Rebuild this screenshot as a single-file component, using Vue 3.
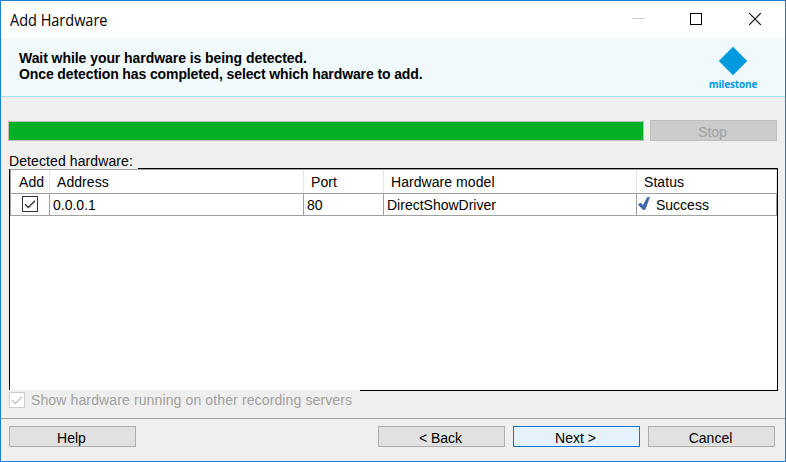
<script setup>
const columns = ['Add', 'Address', 'Port', 'Hardware model', 'Status']
const rows = [{ address: '0.0.0.1', port: '80', model: 'DirectShowDriver', status: 'Success' }]
</script>

<template>
  <div class="window">
    <header class="titlebar">
      <span class="title"><span class="t">Add Hardware</span></span>
      <svg class="controls" width="160" height="36" viewBox="0 0 160 36">
        <path d="M7 17.5H19" stroke="#ccc" fill="none" />
        <rect x="65.5" y="12.5" width="11" height="11" stroke="#000" fill="none" />
        <path d="M124.2 12.2l11.6 11.6M135.8 12.2l-11.6 11.6" stroke="#000" stroke-width="1.1" fill="none" />
      </svg>
    </header>
    <section class="banner">
      <div class="message">
        <div><span class="t l1">Wait while your hardware is being detected.</span></div>
        <div><span class="t l2">Once detection has completed, select which hardware to add.</span></div>
      </div>
      <div class="brand">
        <svg width="30" height="30" viewBox="0 0 30 30"><path d="M15 .8L29.2 15 15 29.2.8 15z" fill="#0099de" /></svg>
        <span>milestone</span>
      </div>
    </section>
    <main class="content">
      <div class="progress-row">
        <div class="progress"></div>
        <button class="btn stop" disabled><span>Stop</span></button>
      </div>
      <div class="caption"><span class="label">Detected hardware:</span><span class="rule"></span></div>
      <div class="list">
        <div class="grid head">
          <div v-for="c in columns" :key="c" class="cell">{{ c }}</div>
        </div>
        <div v-for="r in rows" :key="r.address" class="grid row">
          <div class="cell check">
            <svg width="16" height="16" viewBox="0 0 16 16">
              <rect x=".5" y=".5" width="15" height="15" fill="#fff" stroke="#333" />
              <path d="M3 8.2l3.3 3.3L13 4.7" fill="none" stroke="#333" stroke-width="1.3" />
            </svg>
          </div>
          <div class="cell">{{ r.address }}</div>
          <div class="cell">{{ r.port }}</div>
          <div class="cell">{{ r.model }}</div>
          <div class="cell status">
            <svg width="14" height="14" viewBox="0 0 14 14">
              <path d="M.2 7.4L3 6.2l2 2.6L9.2.8l2.3-.5L7 12.6H5z" fill="#3f68ae" stroke="#344c85" stroke-width=".6" />
            </svg>
            <span>{{ r.status }}</span>
          </div>
        </div>
      </div>
      <div class="under"><span class="gap"></span><span class="rule"></span></div>
      <div class="option">
        <svg width="16" height="16" viewBox="0 0 16 16">
          <rect x=".5" y=".5" width="15" height="15" fill="#fff" stroke="#ccc" />
          <path d="M3 8.2l3.3 3.3L13 4.7" fill="none" stroke="#c4c4c4" stroke-width="1.3" />
        </svg>
        <span class="t opt">Show hardware running on other recording servers</span>
      </div>
    </main>
    <footer class="footer">
      <button class="btn help"><span>Help</span></button>
      <button class="btn"><span>&lt; Back</span></button>
      <button class="btn next"><span>Next &gt;</span></button>
      <button class="btn"><span>Cancel</span></button>
    </footer>
  </div>
</template>

<style>
body { margin: 0; }
</style>

<style scoped>
* { box-sizing: border-box; }
.window {
  width: 786px; height: 462px; border: 1px solid #1a80d2; background: #efefef;
  display: flex; flex-direction: column; overflow: hidden;
  font: 14px/16px "Liberation Sans", Arial, sans-serif; color: #000;
}
.t { display: inline-block; white-space: nowrap; }
.titlebar { height: 37px; background: #fff; display: flex; justify-content: space-between; }
.title { padding: 8px 0 0 9px; font: 16px/22px "Open Sans", "Noto Sans", sans-serif; }
.title .t { transform: scaleX(.905); transform-origin: 0 0; }
.banner {
  height: 59px; background: #f0f9fc; border-bottom: 1px solid #a0e2f8;
  display: flex; justify-content: space-between; padding: 12px 27px 0 18px;
}
.message { font-weight: bold; font-size: 14px; line-height: 16px; }
.l1 { letter-spacing: -.06px; }
.l2 { letter-spacing: -.11px; }
.brand { width: 50px; display: flex; flex-direction: column; align-items: center; margin-top: -4px; }
.brand svg { flex: none; }
.brand span { font: 700 10px/14px "Open Sans", sans-serif; letter-spacing: -.15px; color: #0099de; margin-top: 1px; }
.content { height: 321px; padding: 23px 7px 0; display: flex; flex-direction: column; }
.progress-row { display: flex; justify-content: space-between; align-items: flex-end; height: 21px; padding-right: 1px; }
.progress { width: 636px; height: 20px; background: #06b025; border: 1px solid #bcbcbc; }
.btn {
  width: 127px; height: 21px; margin: 0; padding: 3px 2px 0 0; border: 1px solid #adadad; border-radius: 0;
  background: #e1e1e1; font: 14px/16px "Liberation Sans", Arial, sans-serif; color: #000; overflow: hidden;
  display: block; text-align: center;
}
.btn span { display: block; height: 16px; overflow: hidden; }
.stop { background: #ccc; border-color: #bfbfbf; color: #a0a0a0; }
.caption { height: 28px; display: flex; align-items: flex-end; padding-left: 1px; }
.label { width: 129px; height: 16px; white-space: nowrap; letter-spacing: .1px; }
.caption .rule { flex: 1; height: 1px; background: #000; }
.list { height: 221px; margin-left: 1px; background: #fff; border: 1px solid #000; border-width: 0 1px; }
.grid { display: grid; grid-template-columns: 39px 254px 80px 253px 1fr; border-left: 1px solid #a0a0a0; border-bottom: 1px solid #a0a0a0; }
.head { height: 25px; border-top: 1px solid #a0a0a0; }
.row { height: 22px; }
.cell { border-right: 1px solid #a0a0a0; padding: 3px 0 0 3px; white-space: nowrap; }
.head .cell { border-right-color: #e5e5e5; padding: 4px 0 0 7px; letter-spacing: .06px; }
.head .cell:first-child { padding-left: 8px; }
.check { padding: 2px 0 0 11px; }
.status { display: flex; padding-left: 1px; }
.status span { margin-left: 4px; }
.under { height: 1px; display: flex; margin-left: 1px; }
.gap { width: 351px; }
.under .rule { flex: 1; background: #000; }
.option { display: flex; padding: 1px 0 0 1px; color: #a0a0a0; }
.opt { margin-left: 6px; letter-spacing: .125px; }
.footer { border-top: 1px solid #a0a0a0; flex: 1; display: flex; gap: 8px; padding: 7px 0 0 8px; }
.help { margin-right: 234px; }
.next { background: #e5f1fb; border-color: #0078d7; }
</style>
